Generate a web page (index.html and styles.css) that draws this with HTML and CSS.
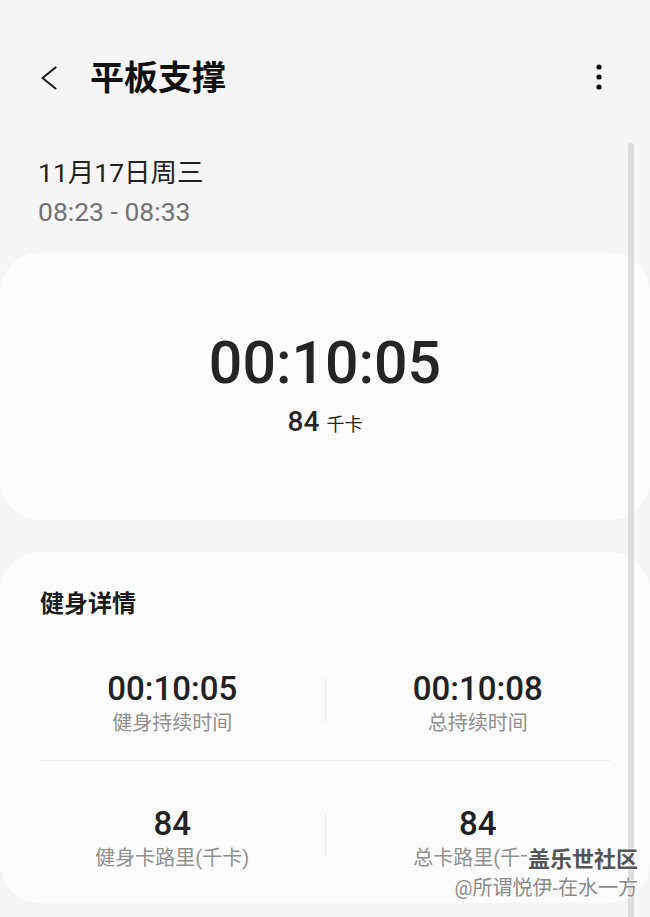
FILE: index.html
```html
<!DOCTYPE html>
<html lang="zh-CN">

<head>
    <meta charset="UTF-8">
    <meta name="viewport" content="width=device-width, initial-scale=1.0">
    <title>平板支撑</title>
    <link rel="stylesheet" href="styles.css">
</head>

<body>

    <div class="topbar">
        <svg class="back-icon" width="18" height="24" viewBox="0 0 18 24">
            <path d="M15.5 1.5 L2.5 12 L15.5 22.5" fill="none" stroke="#222" stroke-width="2.2" stroke-linecap="round" stroke-linejoin="round"/>
        </svg>
        <h1 class="title">平板支撑</h1>
        <svg class="more-icon" width="6" height="26" viewBox="0 0 6 26">
            <circle cx="3" cy="3" r="2.6" fill="#111"/>
            <circle cx="3" cy="13" r="2.6" fill="#111"/>
            <circle cx="3" cy="23" r="2.6" fill="#111"/>
        </svg>
    </div>

    <div class="when">
        <div class="when-date">11月17日周三</div>
        <div class="when-time">08:23 - 08:33</div>
    </div>

    <div class="card summary">
        <div class="summary-time">00:10:05</div>
        <div class="summary-kcal">84 <span class="unit">千卡</span></div>
    </div>

    <div class="card details">
        <h2 class="details-title">健身详情</h2>

        <div class="stats-row first">
            <div class="stat">
                <div class="stat-value">00:10:05</div>
                <div class="stat-label">健身持续时间</div>
            </div>
            <div class="stat-sep"></div>
            <div class="stat">
                <div class="stat-value">00:10:08</div>
                <div class="stat-label">总持续时间</div>
            </div>
        </div>

        <div class="rule"></div>

        <div class="stats-row second">
            <div class="stat">
                <div class="stat-value">84</div>
                <div class="stat-label">健身卡路里(千卡)</div>
            </div>
            <div class="stat-sep"></div>
            <div class="stat">
                <div class="stat-value">84</div>
                <!-- cut off where the watermark starts -->
                <div class="stat-label"><span class="cut">总卡路里(千卡)</span></div>
            </div>
        </div>
    </div>

    <!-- scroll indicator + watermark sit on top of the cards -->
    <div class="scrollbar"></div>
    <div class="watermark">
        <div class="wm-brand">盖乐世社区</div>
        <div class="wm-user">@所谓悦伊-在水一方</div>
    </div>

</body>

</html>
```

FILE: styles.css
```css
body {
    font-family: Roboto, "Noto Sans CJK SC", sans-serif;
    background: #f5f5f5;
    margin: 0;
    padding: 0;
    width: 650px;
    height: 917px;
    overflow: hidden;
    position: relative;
    color: #222;
}

.topbar {
    display: flex;
    align-items: center;
    height: 76px;
    padding: 40px 48px 0 40px;
}

.back-icon {
    flex: none;
}

.title {
    margin: 0 0 0 32px;
    font-size: 34px;
    line-height: 1;
    font-weight: bold;
    color: #111;
}

.more-icon {
    margin-left: auto;
    margin-top: -2px;
}

.when {
    padding: 37px 0 0 38px;
}

.when-date {
    font-size: 26.5px;
    line-height: 39px;
    color: #222;
}

.when-time {
    font-size: 26.5px;
    line-height: 39px;
    color: #737373;
}

.card {
    background: #fcfcfc;
    border-radius: 40px;
    box-sizing: border-box;
}

.summary {
    margin-top: 22px;
    height: 267px;
    padding-top: 75px;
    text-align: center;
}

.summary-time {
    font-size: 59px;
    line-height: 70px;
    font-weight: 500;
    color: #252525;
}

.summary-kcal {
    margin-top: 7px;
    font-size: 28px;
    line-height: 34px;
    font-weight: 500;
    color: #252525;
}

.summary-kcal .unit {
    font-size: 18px;
    font-weight: normal;
}

.details {
    margin-top: 32px;
    height: 351px;
    padding: 36px 20px 0 20px;
}

.details-title {
    margin: 0 0 0 20px;
    font-size: 24px;
    line-height: 32px;
    font-weight: bold;
    color: #1c1c1c;
}

.stats-row {
    display: grid;
    grid-template-columns: 1fr 1px 1fr;
    align-items: center;
}

.stats-row.first {
    padding: 50px 0 23px 0;
}

.stats-row.second {
    padding-top: 44px;
}

.stat {
    text-align: center;
}

.stat-value {
    font-size: 33px;
    line-height: 38px;
    font-weight: 500;
    color: #222;
}

.stat-label {
    margin-top: 1px;
    font-size: 20px;
    line-height: 28px;
    color: #8f8f8f;
    white-space: nowrap;
}

.stat-label .cut {
    display: inline-block;
    vertical-align: top;
    width: 114px;
    margin-right: 15px;
    overflow: hidden;
    text-align: left;
}

.stat-sep {
    height: 46px;
    margin-top: -8px;
    background: #ededed;
}

.rule {
    height: 1px;
    margin: 0 20px;
    background: #ebebeb;
}

.scrollbar {
    position: absolute;
    left: 628px;
    top: 143px;
    width: 6px;
    height: 780px;
    border-radius: 3px;
    background: #dddddd;
}

.watermark {
    position: absolute;
    right: 12px;
    top: 846px;
    text-align: right;
}

.wm-brand {
    font-size: 22px;
    line-height: 28px;
    font-weight: bold;
    color: #555;
    text-shadow: 0 0 2px #fff, 0 0 2px #fff;
}

.wm-user {
    font-size: 20px;
    line-height: 28px;
    color: #8a8a8a;
    text-shadow: 0 0 2px #fff, 0 0 2px #fff;
}
```
